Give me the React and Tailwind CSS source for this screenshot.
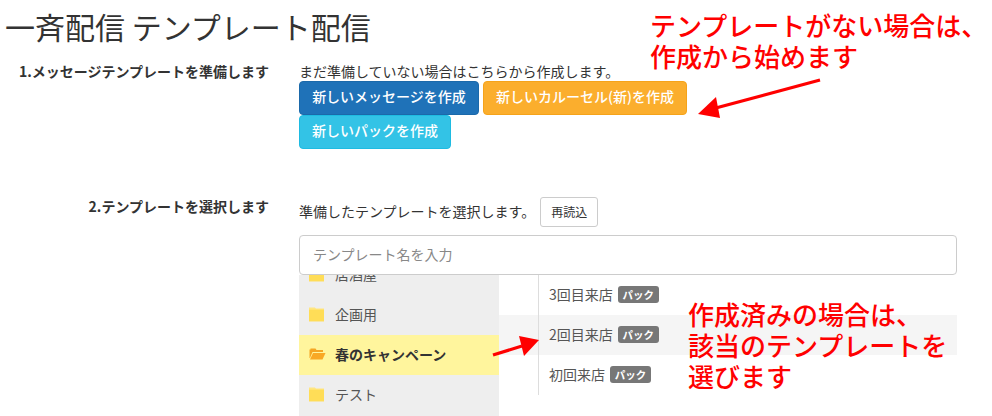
const font = { fontFamily: '"Noto Sans CJK JP", "Liberation Sans", sans-serif' };

function Folder({ open }) {
  if (open) {
    return (
      <svg width="17" height="14" viewBox="0 0 16 14" className="shrink-0">
        <path d="M0 2.5 H1 V1.5 H6 L7 3 H13.5 V5 H3 L0.5 11 H0 Z" fill="#f5a623" />
        <path d="M3.5 6 H16 L13 12.5 H0.5 Z" fill="#f9a825" />
      </svg>
    );
  }
  return (
    <svg width="15" height="15" viewBox="0 0 14 14" className="shrink-0 mr-[2px]">
      <path d="M0 3 V0.5 H5.5 L6.5 1.5 H14 V3.5 H0 Z" fill="#ffe680" />
      <rect x="0" y="2.5" width="14" height="11" fill="#ffdd57" />
    </svg>
  );
}

function FolderRow({ label, open }) {
  return (
    <div className={`h-10 flex items-center pl-[10px] pb-[2px] gap-[9px] text-sm ${open ? "bg-[#fff59d] font-bold text-[#333]" : "text-[#555]"}`}>
      <Folder open={open} />
      <span>{label}</span>
    </div>
  );
}

function TemplateRow({ label, active }) {
  return (
    <div className={`h-10 flex items-center ${active ? "bg-[#f5f5f5]" : ""}`}>
      <div className="ml-[39px] h-10 border-l border-[#ddd] pl-[10px] pb-[2px] flex items-center gap-[5px] text-sm text-[#555]">
        <span>{label}</span>
        <span className="bg-[#777] text-white text-[10.5px] font-bold rounded-[3px] h-[17px] w-[41px] flex items-center justify-center">パック</span>
      </div>
    </div>
  );
}

function Btn({ className, children }) {
  return (
    <button className={`h-[34px] px-3 pb-[4px] rounded border text-sm text-white font-medium flex items-center justify-center ${className}`}>
      {children}
    </button>
  );
}

export default function App() {
  return (
    <div style={font} className="relative w-[992px] h-[416px] overflow-hidden bg-white text-[#333] text-sm">
      <h1 className="text-[30px] leading-[33px] pl-[5px] pt-[10px] font-normal text-[#333]">一斉配信 テンプレート配信</h1>

      <div className="flex mt-[18px]">
        <div className="w-[269px] shrink-0 text-right font-bold text-sm leading-5">1.メッセージテンプレートを準備します</div>
        <div className="ml-[30px] w-[400px]">
          <p className="text-sm leading-5 h-5">まだ準備していない場合はこちらから作成します。</p>
          <div className="flex flex-wrap gap-x-1">
            <Btn className="w-[180px] bg-[#1f72b8] border-[#1b69aa]">新しいメッセージを作成</Btn>
            <Btn className="w-[204px] bg-[#fbae2d] border-[#f5a31a]">新しいカルーセル(新)を作成</Btn>
            <Btn className="w-[152px] bg-[#33c3e6] border-[#1ebbe2]">新しいパックを作成</Btn>
          </div>
        </div>
      </div>

      <div className="flex mt-[48px]">
        <div className="w-[269px] shrink-0 text-right font-bold text-sm leading-5 -mt-px">2.テンプレートを選択します</div>
        <div className="ml-[30px] w-[658px]">
          <div className="flex items-center gap-[5px] h-[30px]">
            <span className="text-sm pb-[2px]">準備したテンプレートを選択します。</span>
            <button className="h-[30px] w-[58px] pb-px border border-[#ccc] rounded-[3px] text-xs text-[#333] bg-white">再読込</button>
          </div>
          <div className="mt-[8px] h-10 w-[658px] border border-[#ccc] rounded pb-[2px] flex items-center pl-[13px] text-sm text-[#888] bg-white relative z-10">テンプレート名を入力</div>
          <div className="flex h-[141px] overflow-hidden">
            <div className="w-[200px] bg-[#eeeeee] shrink-0 -mt-5 h-[161px]">
              <FolderRow label="居酒屋" />
              <FolderRow label="企画用" />
              <FolderRow label="春のキャンペーン" open />
              <FolderRow label="テスト" />
            </div>
            <div className="flex-1">
              <TemplateRow label="3回目来店" />
              <TemplateRow label="2回目来店" active />
              <TemplateRow label="初回来店" />
            </div>
          </div>
        </div>
      </div>

      <div className="absolute left-[650px] top-[9px] text-[26px] leading-[31px] font-medium text-[#ff0000] whitespace-nowrap z-20">
        テンプレートがない場合は、<br />作成から始めます
      </div>
      <div className="absolute left-[688px] top-[298px] text-[26px] leading-[31px] font-medium text-[#ff0000] whitespace-nowrap z-20">
        作成済みの場合は、<br />該当のテンプレートを<br />選びます
      </div>

      <svg className="absolute left-0 top-0 z-20 pointer-events-none" width="992" height="416">
        <line x1="820" y1="80" x2="712" y2="109" stroke="#ff0000" strokeWidth="3.2" />
        <polygon points="698,114 716,97 720,118" fill="#ff0000" />
        <line x1="493" y1="355" x2="522" y2="346" stroke="#ff0000" strokeWidth="3.2" />
        <polygon points="539,340 519,336 524,356" fill="#ff0000" />
      </svg>
    </div>
  );
}
